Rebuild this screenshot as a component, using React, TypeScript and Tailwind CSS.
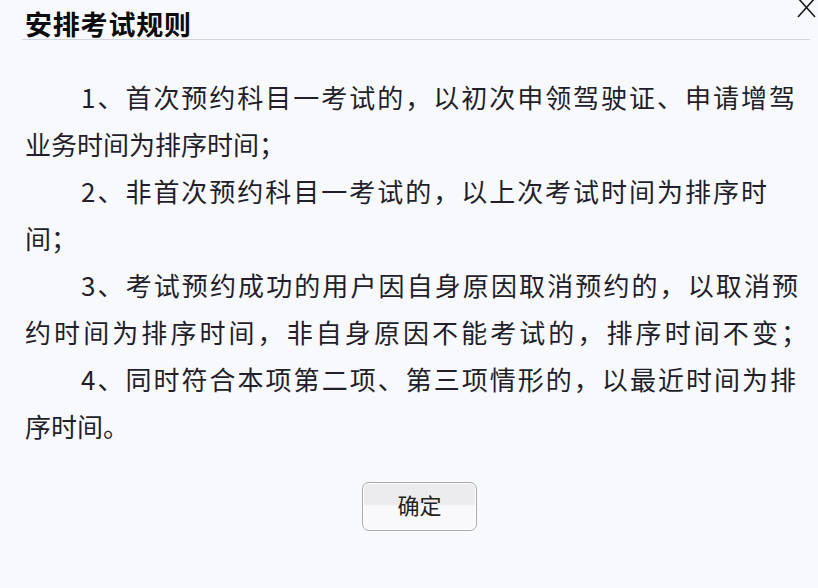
import React from "react";

const font = { fontFamily: '"Noto Sans CJK SC", "Noto Sans", sans-serif' };

export default function App() {
  return (
    <div
      className="relative w-[818px] h-[588px] overflow-hidden bg-[#f8f9fc] text-[#231f2a]"
      style={font}
    >
      {/* close X */}
      <svg
        className="absolute left-[796px] top-[-3px]"
        width="22"
        height="22"
        viewBox="0 0 22 22"
      >
        <path d="M2 1 L19 20 M19 1 L2 20" stroke="#1a1a1a" strokeWidth="1.6" fill="none" />
      </svg>

      <div className="pt-[10px] pl-[22px] pr-[8px]">
        <div className="border-b border-[#d4d5dc] pl-[3px] pb-[1px]">
          <div className="text-[27px] leading-[28px] font-bold tracking-[0.8px] text-[#0d0d10]">
            安排考试规则
          </div>
        </div>
      </div>

      <div className="mt-[33px] pl-[25px] text-[26px] leading-[47px]">
        <div className="pl-[56px] w-[770px] text-justify [text-align-last:justify]">
          1、首次预约科目一考试的，以初次申领驾驶证、申请增驾
        </div>
        <div className="whitespace-nowrap">业务时间为排序时间；</div>
        <div className="pl-[56px] w-[742px] text-justify [text-align-last:justify]">
          2、非首次预约科目一考试的，以上次考试时间为排序时
        </div>
        <div className="whitespace-nowrap">间；</div>
        <div className="pl-[56px] w-[773px] text-justify [text-align-last:justify]">
          3、考试预约成功的用户因自身原因取消预约的，以取消预
        </div>
        <div className="w-[782px] text-justify [text-align-last:justify]">
          约时间为排序时间，非自身原因不能考试的，排序时间不变；
        </div>
        <div className="pl-[56px] w-[771px] text-justify [text-align-last:justify]">
          4、同时符合本项第二项、第三项情形的，以最近时间为排
        </div>
        <div className="whitespace-nowrap">序时间。</div>
      </div>

      <div className="mt-[33px] pl-[362px]">
        <button className="w-[115px] h-[49px] pb-[5px] rounded-[7px] border border-[#a9a9ae] bg-[linear-gradient(to_bottom,#ececee_0%,#ececee_45%,#f9f9fb_50%,#f9f9fb_100%)] text-[22px] leading-[30px] text-[#222] shadow-[inset_0_0_0_1px_#ffffff]">
          确定
        </button>
      </div>
    </div>
  );
}
